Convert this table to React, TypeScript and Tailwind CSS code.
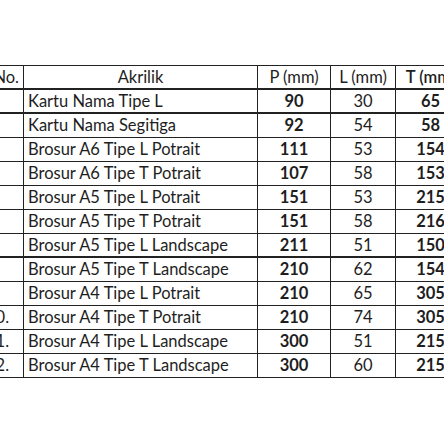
const rows: [string, string, string, string, string][] = [
  ["1.", "Kartu Nama Tipe L", "90", "30", "65"],
  ["2.", "Kartu Nama Segitiga", "92", "54", "58"],
  ["3.", "Brosur A6 Tipe L Potrait", "111", "53", "154"],
  ["4.", "Brosur A6 Tipe T Potrait", "107", "58", "153"],
  ["5.", "Brosur A5 Tipe L Potrait", "151", "53", "215"],
  ["6.", "Brosur A5 Tipe T Potrait", "151", "58", "216"],
  ["7.", "Brosur A5 Tipe L Landscape", "211", "51", "150"],
  ["8.", "Brosur A5 Tipe T Landscape", "210", "62", "154"],
  ["9.", "Brosur A4 Tipe L Potrait", "210", "65", "305"],
  ["10.", "Brosur A4 Tipe T Potrait", "210", "74", "305"],
  ["11.", "Brosur A4 Tipe L Landscape", "300", "51", "215"],
  ["12.", "Brosur A4 Tipe T Landscape", "300", "60", "215"],
]

// rows after which the sheet has a thicker rule
const thick = [0, 6]

export default function App() {
  return (
    <div className="w-[444px] h-[444px] overflow-hidden bg-white pt-[65px] font-['Lato',sans-serif] text-[16.5px] text-[#1e1e1e]">
      <div className="-ml-[27px] w-[560px] border-t border-[#222]">
        <div className="flex h-[24px] items-center border-b-2 border-[#222]">
          <div className="w-[51px] h-full flex items-center justify-end pr-[4px] border-r border-[#222]">No.</div>
          <div className="w-[234px] h-full flex items-center justify-center border-r border-[#222]">Akrilik</div>
          <div className="w-[73px] h-full flex items-center justify-center border-r border-[#222]">P (mm)</div>
          <div className="w-[65px] h-full flex items-center justify-center border-r border-[#222]">L (mm)</div>
          <div className="w-[70px] h-full flex items-center justify-center font-semibold border-r border-[#222]">T (mm)</div>
        </div>
        {rows.map((r, i) => (
          <div
            key={r[0]}
            className={
              thick.includes(i)
                ? "flex h-[24px] border-b-2 border-[#222]"
                : "flex h-[24px] border-b border-[#222]"
            }
          >
            <div className="w-[51px] h-full flex items-center pl-[13px] border-r border-[#222]">{r[0]}</div>
            <div className="w-[234px] h-full flex items-center pl-[4px] border-r border-[#222]">{r[1]}</div>
            <div className="w-[73px] h-full flex items-center justify-center font-bold border-r border-[#222]">{r[2]}</div>
            <div className="w-[65px] h-full flex items-center justify-center border-r border-[#222]">{r[3]}</div>
            <div className="w-[70px] h-full flex items-center justify-center font-bold border-r border-[#222]">{r[4]}</div>
          </div>
        ))}
      </div>
    </div>
  )
}
